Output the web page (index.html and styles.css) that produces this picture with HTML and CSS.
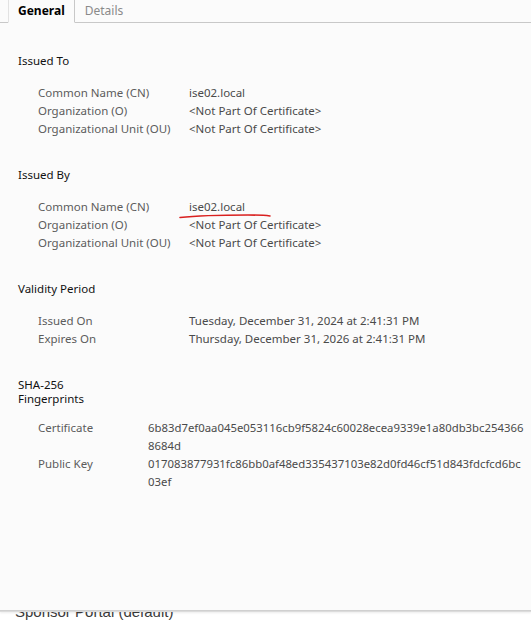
FILE: index.html
```html
<!DOCTYPE html>
<html>
<head>
<meta charset="utf-8">
<link rel="stylesheet" href="styles.css">
</head>
<body>
<div class="panel">
  <div class="tabs">
    <div class="tab-spacer"></div>
    <div class="tab active">General</div>
    <div class="tab">Details</div>
    <div class="tab-fill"></div>
  </div>
  <div class="content">
    <section class="sec">
      <h3 class="head">Issued To</h3>
      <div class="rows">
        <div class="lbl">Common Name (CN)</div><div class="val">ise02.local</div>
        <div class="lbl">Organization (O)</div><div class="val">&lt;Not Part Of Certificate&gt;</div>
        <div class="lbl">Organizational Unit (OU)</div><div class="val">&lt;Not Part Of Certificate&gt;</div>
      </div>
    </section>
    <section class="sec">
      <h3 class="head">Issued By</h3>
      <div class="rows">
        <div class="lbl">Common Name (CN)</div>
        <div class="val marked">ise02.local<svg class="scribble" width="96" height="10" viewBox="0 0 96 10"><path d="M2 7.5 C 20 5.5, 45 5, 70 5 C 80 5, 87 5.3, 92 6" fill="none" stroke="#d9201f" stroke-width="1.6" stroke-linecap="round"/></svg></div>
        <div class="lbl">Organization (O)</div><div class="val">&lt;Not Part Of Certificate&gt;</div>
        <div class="lbl">Organizational Unit (OU)</div><div class="val">&lt;Not Part Of Certificate&gt;</div>
      </div>
    </section>
    <section class="sec">
      <h3 class="head">Validity Period</h3>
      <div class="rows">
        <div class="lbl">Issued On</div><div class="val">Tuesday, December 31, 2024 at 2:41:31 PM</div>
        <div class="lbl">Expires On</div><div class="val">Thursday, December 31, 2026 at 2:41:31 PM</div>
      </div>
    </section>
    <section class="sec">
      <h3 class="head two">SHA-256<br>Fingerprints</h3>
      <div class="rows narrow">
        <div class="lbl">Certificate</div><div class="val hash">6b83d7ef0aa045e053116cb9f5824c60028ecea9339e1a80db3bc254366<br>8684d</div>
        <div class="lbl">Public Key</div><div class="val hash">017083877931fc86bb0af48ed335437103e82d0fd46cf51d843fdcfcd6bc<br>03ef</div>
      </div>
    </section>
  </div>
</div>
<div class="behind">Sponsor Portal (default)</div>
</body>
</html>
```
FILE: styles.css
```css
html, body {
  margin: 0;
  padding: 0;
  background: #ffffff;
  overflow: hidden;
}
body {
  width: 531px;
  height: 620px;
  font-family: "Noto Sans", sans-serif;
}
.panel {
  position: relative;
  z-index: 2;
  height: 610px;
  background: #fbfbfb;
  box-shadow: 0 1px 0 #d0d0d0, 0 2px 0 #dcdcdc, 0 3px 2px rgba(0,0,0,0.08);
}
.tabs {
  display: flex;
  height: 23px;
  font-size: 12px;
}
.tab-spacer {
  width: 8px;
  border-bottom: 1px solid #c8c8c8;
}
.tab {
  padding: 3px 10px 0 10px;
  color: #8a8a8a;
  border-bottom: 1px solid #c8c8c8;
  line-height: 16px;
}
.tab.active {
  color: #000;
  font-weight: 700;
  border-bottom: 1px solid transparent;
  border-left: 1px solid #e2e2e2;
  border-right: 1px solid #c8c8c8;
  padding: 3px 9px 0 9px;
}
.tab-fill {
  flex: 1;
  border-bottom: 1px solid #c8c8c8;
}
.content {
  padding: 29px 0 0 18px;
  font-size: 11.5px;
}
.sec {
  margin-bottom: 28px;
}
.head {
  margin: 0 0 14px 0;
  font-size: 11.5px;
  font-weight: 400;
  color: #111;
  line-height: 18px;
}
.head.two {
  padding-top: 2px;
  line-height: 14px;
  margin-bottom: 13px;
}
.rows {
  display: grid;
  grid-template-columns: 151px 1fr;
  padding-left: 20px;
  line-height: 18px;
}
.rows.narrow {
  grid-template-columns: 110px 1fr;
}
.lbl {
  color: #5c5c5c;
}
.val {
  color: #4a4a4a;
}
.hash {
  white-space: nowrap;
  font-size: 11.35px;
}
.marked {
  position: relative;
}
.scribble {
  position: absolute;
  left: -11px;
  top: 12px;
}
.behind {
  position: relative;
  z-index: 1;
  margin-top: -7px;
  padding-left: 15px;
  font-family: "Liberation Sans", Arial, sans-serif;
  font-size: 15px;
  line-height: 17px;
  color: #3a3a3a;
}
```
